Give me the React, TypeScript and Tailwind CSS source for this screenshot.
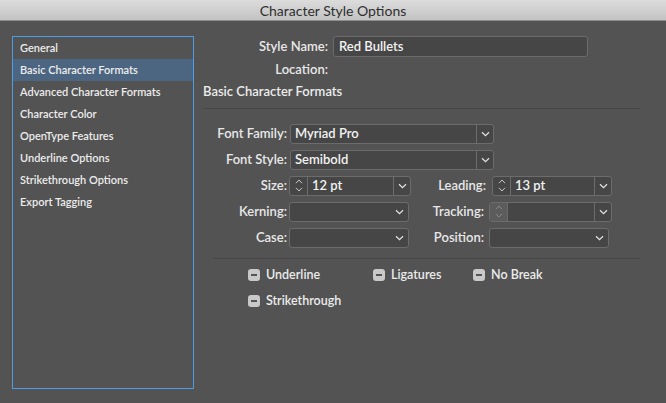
import React from "react";

const sections = [
  "General",
  "Basic Character Formats",
  "Advanced Character Formats",
  "Character Color",
  "OpenType Features",
  "Underline Options",
  "Strikethrough Options",
  "Export Tagging",
];

const Chevron = () => (
  <svg width="9" height="6" viewBox="0 0 9 6" fill="none">
    <path d="M1 1.2 L4.5 4.6 L8 1.2" stroke="#e0e0e0" strokeWidth="1.3" />
  </svg>
);

const Spinner = ({ disabled }: { disabled?: boolean }) => (
  <div
    className={`flex h-full w-[18px] shrink-0 flex-col items-center justify-center gap-[3px] border-r border-[#6c6c6c] ${
      disabled ? "bg-[#5c5c5c]" : ""
    }`}
  >
    <svg width="8" height="5" viewBox="0 0 8 5" fill="none">
      <path d="M1 4.2 L4 1 L7 4.2" stroke={disabled ? "#8a8a8a" : "#c8c8c8"} strokeWidth="1" />
    </svg>
    <svg width="8" height="5" viewBox="0 0 8 5" fill="none">
      <path d="M1 0.8 L4 4 L7 0.8" stroke={disabled ? "#8a8a8a" : "#c8c8c8"} strokeWidth="1" />
    </svg>
  </div>
);

interface FieldProps {
  width: string;
  value?: string;
  divider?: boolean;
  spinner?: boolean;
  spinnerDisabled?: boolean;
}

const Field = ({ width, value, divider, spinner, spinnerDisabled }: FieldProps) => (
  <div
    className={`flex h-[20px] shrink-0 items-center overflow-hidden rounded-[3px] border border-[#6c6c6c] bg-[#464646] ${width}`}
  >
    {(spinner || spinnerDisabled) && <Spinner disabled={spinnerDisabled} />}
    <div className="flex-1 truncate pl-[4px] text-[13px] text-[#f2f2f2]">{value}</div>
    <div
      className={`flex h-full w-[17px] shrink-0 items-center justify-center ${
        divider ? "border-l border-[#6c6c6c]" : ""
      }`}
    >
      <Chevron />
    </div>
  </div>
);

const Label = ({ text, width }: { text: string; width: string }) => (
  <div className={`shrink-0 text-right text-[13px] text-[#e8e8e8] ${width}`}>{text}</div>
);

const Check = ({ label }: { label: string }) => (
  <div className="flex items-center gap-[6px]">
    <div className="flex h-[12px] w-[12px] items-center justify-center rounded-[3px] bg-[#c9c9c9]">
      <div className="h-[2px] w-[6px] bg-[#555555]" />
    </div>
    <span className="text-[12.5px] leading-[16px] text-[#ececec]">{label}</span>
  </div>
);

export default function App() {
  return (
    <div
      className="flex h-[403px] w-[666px] flex-col overflow-hidden bg-[#535353] font-semibold"
      style={{ fontFamily: "Lato, 'Open Sans', sans-serif" }}
    >
      <div className="flex h-[21px] shrink-0 items-center justify-center border-b border-[#8e8e8e] bg-gradient-to-b from-[#dcdcdc] to-[#c3c3c3] text-[14px] font-normal text-[#2e2e2e]">
        Character Style Options
      </div>

      <div className="flex flex-1">
        <div className="ml-[12px] mt-[15px] h-[353px] w-[182px] border border-[#4b9de6]">
          {sections.map((s) => (
            <div
              key={s}
              className={`flex h-[22px] items-center pl-[7px] text-[11px] text-[#ececec] ${
                s === "Basic Character Formats" ? "bg-[#4c6682]" : ""
              }`}
            >
              {s}
            </div>
          ))}
        </div>

        <div className="ml-[9px] flex flex-1 flex-col pr-[26px]">
          <div className="mt-[15px] flex items-center">
            <Label text="Style Name:" width="w-[125px]" />
            <div className="ml-[5px] flex h-[21px] w-[255px] items-center rounded-[3px] border border-[#6c6c6c] bg-[#464646] pl-[5px] text-[13px] text-[#f2f2f2]">
              Red Bullets
            </div>
          </div>
          <div className="mt-[5px] flex h-[16px] items-center">
            <Label text="Location:" width="w-[125px]" />
          </div>
          <div className="mt-[4px] text-[13px] text-[#ececec]">Basic Character Formats</div>
          <div className="mt-[6px] h-px bg-[#474747]" />

          <div className="mt-[15px] flex flex-col gap-[6px]">
            <div className="flex items-center">
              <Label text="Font Family:" width="w-[84px]" />
              <div className="ml-[3px]">
                <Field width="w-[204px]" value="Myriad Pro" divider />
              </div>
            </div>
            <div className="flex items-center">
              <Label text="Font Style:" width="w-[84px]" />
              <div className="ml-[3px]">
                <Field width="w-[204px]" value="Semibold" divider />
              </div>
            </div>
            <div className="flex items-center">
              <Label text="Size:" width="w-[84px]" />
              <div className="ml-[2px]">
                <Field width="w-[122px]" value="12 pt" divider spinner />
              </div>
              <Label text="Leading:" width="w-[75px]" />
              <div className="ml-[6px]">
                <Field width="w-[120px]" value="13 pt" divider spinner />
              </div>
            </div>
            <div className="flex items-center">
              <Label text="Kerning:" width="w-[84px]" />
              <div className="ml-[2px]">
                <Field width="w-[120px]" />
              </div>
              <Label text="Tracking:" width="w-[75px]" />
              <div className="ml-[5px]">
                <Field width="w-[123px]" divider spinnerDisabled />
              </div>
            </div>
            <div className="flex items-center">
              <Label text="Case:" width="w-[84px]" />
              <div className="ml-[2px]">
                <Field width="w-[120px]" />
              </div>
              <Label text="Position:" width="w-[75px]" />
              <div className="ml-[5px]">
                <Field width="w-[120px]" />
              </div>
            </div>
          </div>

          <div className="ml-[10px] mt-[10px] h-px bg-[#474747]" />

          <div className="ml-[45px] mt-[8px] flex flex-col gap-[10px]">
            <div className="flex items-center">
              <div className="w-[125px]">
                <Check label="Underline" />
              </div>
              <div className="w-[100px]">
                <Check label="Ligatures" />
              </div>
              <Check label="No Break" />
            </div>
            <Check label="Strikethrough" />
          </div>
        </div>
      </div>
    </div>
  );
}
